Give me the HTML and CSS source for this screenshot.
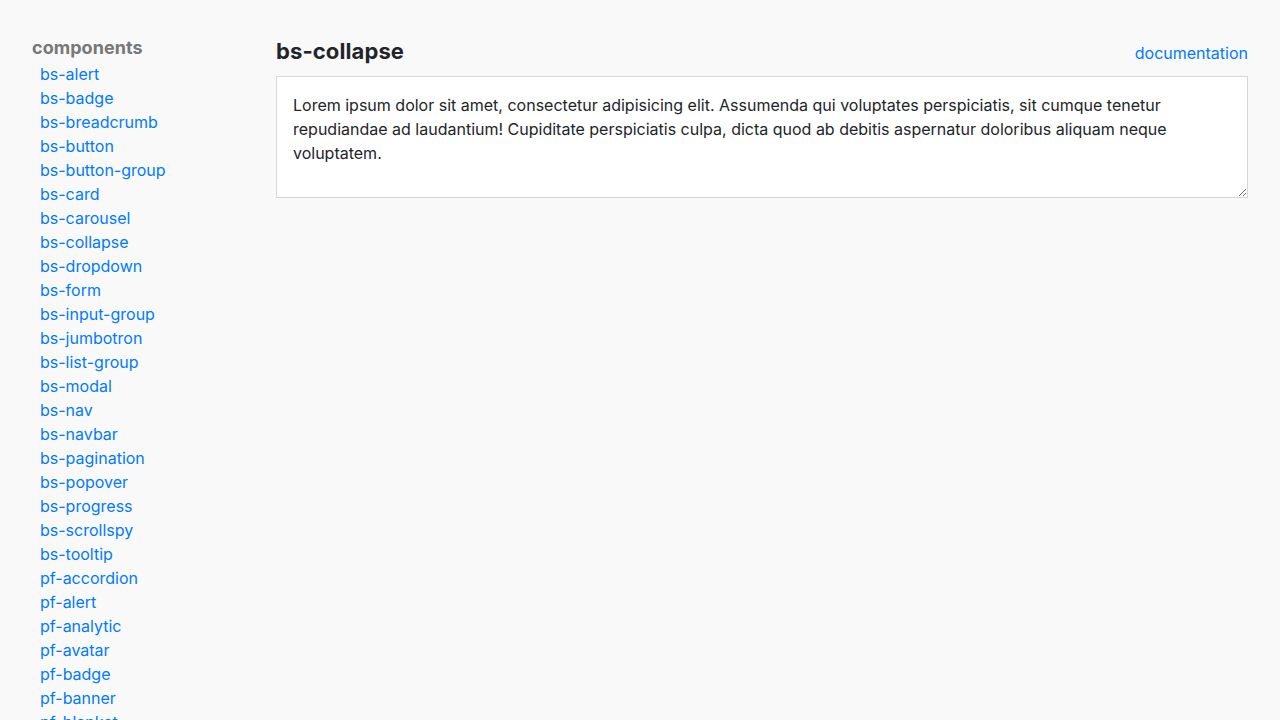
FILE: index.html
```html
<!DOCTYPE html>
<html lang="en">
<head>
<meta charset="utf-8">
<title>bs-collapse</title>
<link rel="stylesheet" href="styles.css">
</head>
<body>
<div class="layout">
  <nav class="sidebar">
    <h3 class="side-title">components</h3>
    <ul class="side-list">
      <li><a href="#">bs-alert</a></li>
      <li><a href="#">bs-badge</a></li>
      <li><a href="#">bs-breadcrumb</a></li>
      <li><a href="#">bs-button</a></li>
      <li><a href="#">bs-button-group</a></li>
      <li><a href="#">bs-card</a></li>
      <li><a href="#">bs-carousel</a></li>
      <li><a href="#">bs-collapse</a></li>
      <li><a href="#">bs-dropdown</a></li>
      <li><a href="#">bs-form</a></li>
      <li><a href="#">bs-input-group</a></li>
      <li><a href="#">bs-jumbotron</a></li>
      <li><a href="#">bs-list-group</a></li>
      <li><a href="#">bs-modal</a></li>
      <li><a href="#">bs-nav</a></li>
      <li><a href="#">bs-navbar</a></li>
      <li><a href="#">bs-pagination</a></li>
      <li><a href="#">bs-popover</a></li>
      <li><a href="#">bs-progress</a></li>
      <li><a href="#">bs-scrollspy</a></li>
      <li><a href="#">bs-tooltip</a></li>
      <li><a href="#">pf-accordion</a></li>
      <li><a href="#">pf-alert</a></li>
      <li><a href="#">pf-analytic</a></li>
      <li><a href="#">pf-avatar</a></li>
      <li><a href="#">pf-badge</a></li>
      <li><a href="#">pf-banner</a></li>
      <li><a href="#">pf-blanket</a></li>
      <li><a href="#">pf-button</a></li>
    </ul>
  </nav>
  <main class="main">
    <header class="main-head">
      <h1 class="main-title">bs-collapse</h1>
      <a class="doc-link" href="#">documentation</a>
    </header>
    <textarea class="demo" readonly>Lorem ipsum dolor sit amet, consectetur adipisicing elit. Assumenda qui voluptates perspiciatis, sit cumque tenetur repudiandae ad laudantium! Cupiditate perspiciatis culpa, dicta quod ab debitis aspernatur doloribus aliquam neque voluptatem.</textarea>
  </main>
</div>
</body>
</html>
```

FILE: styles.css
```css
html, body {
  margin: 0;
  padding: 0;
}
body {
  background: #f9f9f9;
  font-family: Inter, "Liberation Sans", Arial, sans-serif;
  font-size: 16px;
  color: #212529;
}
.layout {
  display: flex;
  gap: 24px;
  padding: 34px 32px 0 32px;
}
.sidebar {
  width: 220px;
  flex: none;
  padding-top: 2px;
}
.side-title {
  margin: 0;
  font-size: 18px;
  font-weight: bold;
  color: #777;
  line-height: 24px;
  letter-spacing: 0.05px;
}
.side-list {
  list-style: none;
  margin: 2px 0 0 0;
  padding: 0 0 0 8px;
}
.side-list li {
  line-height: 24px;
}
.side-list a {
  color: #007bff;
  text-decoration: none;
  font-size: 16px;
}
.main {
  flex: 1;
  min-width: 0;
}
.main-head {
  display: flex;
  justify-content: space-between;
  align-items: center;
  height: 34px;
  margin-bottom: 8px;
}
.main-title {
  margin: 0;
  font-size: 22px;
  font-weight: bold;
  line-height: 34px;
  color: #212529;
  letter-spacing: 0.1px;
}
.doc-link {
  color: #007bff;
  text-decoration: none;
  font-size: 16px;
  line-height: 24px;
  margin-top: 4px;
}
.demo {
  display: block;
  box-sizing: border-box;
  width: 100%;
  height: 122px;
  margin: 0;
  padding: 16px;
  border: 1px solid #d6d6d6;
  background: #fff;
  font-family: Inter, "Liberation Sans", Arial, sans-serif;
  font-size: 16px;
  line-height: 24px;
  color: #212529;
  resize: both;
  outline: none;
}
```
